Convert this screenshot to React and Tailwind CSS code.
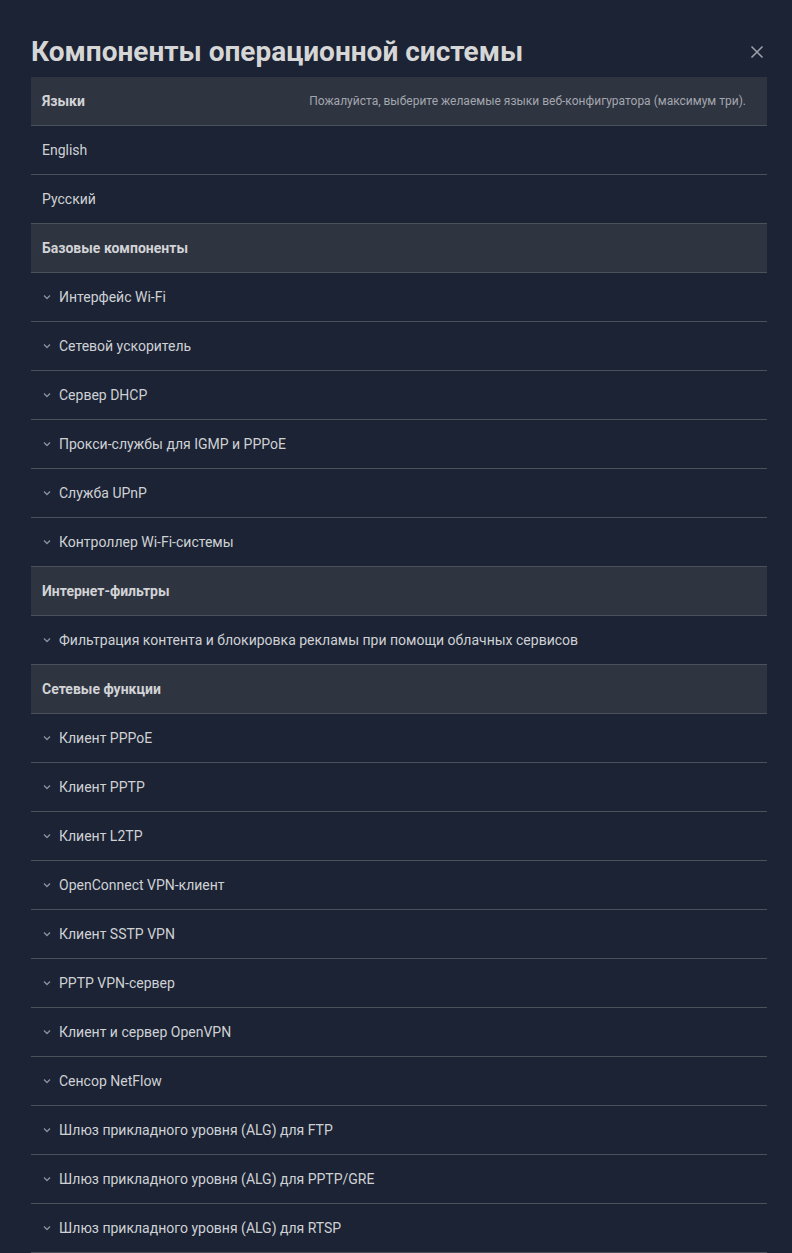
import React from 'react';

const sections = [
  {
    title: 'Языки',
    hint: 'Пожалуйста, выберите желаемые языки веб-конфигуратора (максимум три).',
    plain: true,
    items: ['English', 'Русский'],
  },
  {
    title: 'Базовые компоненты',
    items: [
      'Интерфейс Wi-Fi',
      'Сетевой ускоритель',
      'Сервер DHCP',
      'Прокси-службы для IGMP и PPPoE',
      'Служба UPnP',
      'Контроллер Wi-Fi-системы',
    ],
  },
  {
    title: 'Интернет-фильтры',
    items: ['Фильтрация контента и блокировка рекламы при помощи облачных сервисов'],
  },
  {
    title: 'Сетевые функции',
    items: [
      'Клиент PPPoE',
      'Клиент PPTP',
      'Клиент L2TP',
      'OpenConnect VPN-клиент',
      'Клиент SSTP VPN',
      'PPTP VPN-сервер',
      'Клиент и сервер OpenVPN',
      'Сенсор NetFlow',
      'Шлюз прикладного уровня (ALG) для FTP',
      'Шлюз прикладного уровня (ALG) для PPTP/GRE',
      'Шлюз прикладного уровня (ALG) для RTSP',
    ],
  },
];

const Chevron = () => (
  <svg width="8" height="6" viewBox="0 0 8 6" className="ml-[1px] mr-[8px] shrink-0">
    <path d="M1 1.5 L4 4.5 L7 1.5" fill="none" stroke="#8a929e" strokeWidth="1.3" />
  </svg>
);

const App = () => {
  return (
    <div
      className="min-h-screen bg-[#1b2334] pl-[31px] pr-[25px] pt-[34px] text-[#cfd1d5]"
      style={{ fontFamily: 'Roboto, "Noto Sans", sans-serif' }}
    >
      {/* Header */}
      <div className="mb-[7px] flex h-[36px] items-center justify-between">
        <h1 className="text-[28px] font-bold leading-[36px] text-[#d6d6d6]">
          Компоненты операционной системы
        </h1>
        <button className="mr-[3px] flex h-[14px] w-[14px] items-center justify-center">
          <svg width="14" height="14" viewBox="0 0 14 14">
            <path d="M1.5 1.5 L12.5 12.5 M12.5 1.5 L1.5 12.5" stroke="#9aa0a9" strokeWidth="1.6" />
          </svg>
        </button>
      </div>

      {/* Sections */}
      <div>
        {sections.map(section => (
          <div key={section.title}>
            <div className="flex h-[49px] items-center justify-between border-b border-[#4a515d] bg-[#2f3441] pl-[11px] pr-[21px]">
              <span className="text-[14px] font-bold text-[#d2d3d6]">{section.title}</span>
              {section.hint && (
                <span className="text-[12px] text-[#a3a7ae]">{section.hint}</span>
              )}
            </div>
            {section.items.map(item => (
              <div
                key={item}
                className="flex h-[49px] items-center border-b border-[#4a515d] pl-[11px] text-[14px] text-[#cfd1d5]"
              >
                {!section.plain && <Chevron />}
                {item}
              </div>
            ))}
          </div>
        ))}
      </div>
    </div>
  );
};

export default App;
